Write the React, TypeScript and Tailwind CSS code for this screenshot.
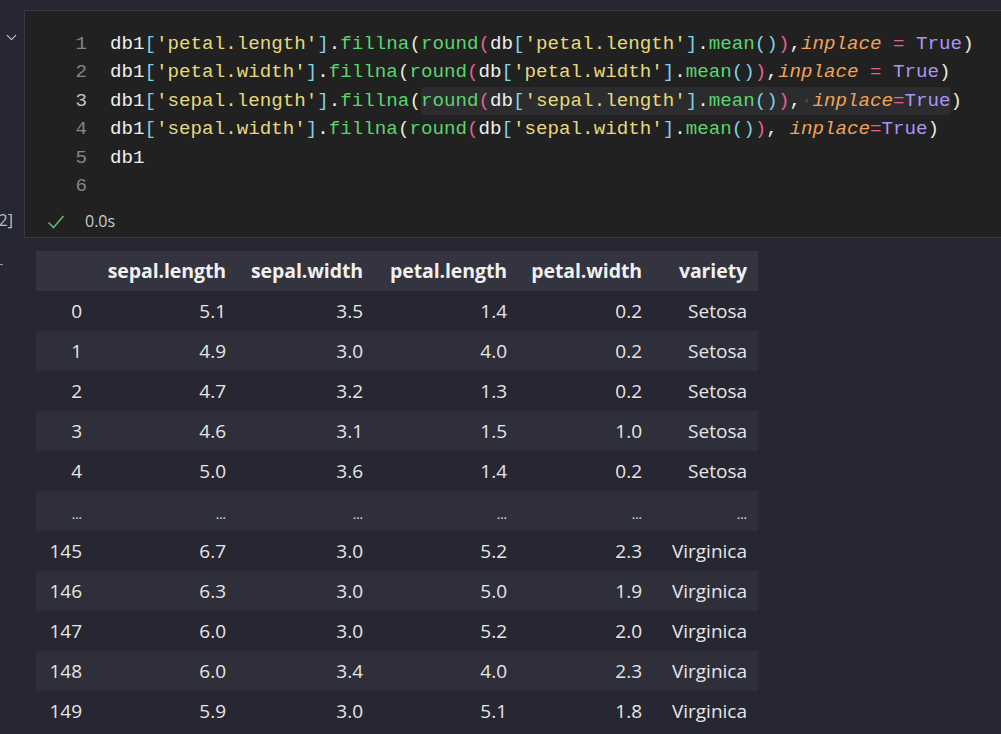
import { ChevronDown } from 'lucide-react'

const Y = 'text-[#e6d97a]'
const G = 'text-[#5bd46e]'
const W = 'text-[#efefef]'
const B = 'text-[#7fd2ea]'
const P = 'text-[#e8608f]'
const C = 'text-[#eee9d2]'
const O = 'text-[#f2a354] italic'
const V = 'text-[#a996f2]'

type Tok = [string, string]

function lineTokens(col: string, spaced: boolean): Tok[] {
  const start: Tok[] = [
    [W, 'db1'], [B, '['], [Y, `'${col}'`], [B, ']'], [W, '.'], [G, 'fillna'], [C, '('],
  ]
  const mid: Tok[] = [
    [G, 'round'], [P, '('], [W, 'db'], [B, '['], [Y, `'${col}'`], [B, ']'], [W, '.'], [G, 'mean'],
    [B, '()'], [P, ')'], [W, ','],
  ]
  const tail: Tok[] = spaced
    ? [[W, ' '], [O, 'inplace'], [P, '='], [V, 'True']]
    : [[O, 'inplace'], [W, ' '], [P, '='], [W, ' '], [V, 'True']]
  return [...start, ...mid, ...tail, [C, ')']]
}

const codeLines: Tok[][] = [
  lineTokens('petal.length', false),
  lineTokens('petal.width', false),
  lineTokens('sepal.length', true),
  lineTokens('sepal.width', true),
  [[W, 'db1']],
  [],
]

function CodeLine({ toks, n }: { toks: Tok[]; n: number }) {
  // line 3 has the bracket pair highlight around the fillna arguments
  if (n === 3) {
    const head = toks.slice(0, 7)
    const body = toks.slice(7, toks.length - 1)
    const last = toks[toks.length - 1]
    return (
      <>
        {head.map((t, i) => <span key={i} className={t[0]}>{t[1]}</span>)}
        <span className="bg-[#2c2c2e] rounded-[4px] py-[3px]">
          {body.map((t, i) =>
            t[1] === ' ' ? <span key={i} className="text-[#4d4d4d]">·</span> : <span key={i} className={t[0]}>{t[1]}</span>
          )}
        </span>
        <span className={last[0]}>{last[1]}</span>
      </>
    )
  }
  return <>{toks.map((t, i) => <span key={i} className={t[0]}>{t[1]}</span>)}</>
}

const rows: [string, string, string, string, string, string][] = [
  ['0', '5.1', '3.5', '1.4', '0.2', 'Setosa'],
  ['1', '4.9', '3.0', '4.0', '0.2', 'Setosa'],
  ['2', '4.7', '3.2', '1.3', '0.2', 'Setosa'],
  ['3', '4.6', '3.1', '1.5', '1.0', 'Setosa'],
  ['4', '5.0', '3.6', '1.4', '0.2', 'Setosa'],
  ['...', '...', '...', '...', '...', '...'],
  ['145', '6.7', '3.0', '5.2', '2.3', 'Virginica'],
  ['146', '6.3', '3.0', '5.0', '1.9', 'Virginica'],
  ['147', '6.0', '3.0', '5.2', '2.0', 'Virginica'],
  ['148', '6.0', '3.4', '4.0', '2.3', 'Virginica'],
  ['149', '5.9', '3.0', '5.1', '1.8', 'Virginica'],
]

const widths = ['w-[58px]', 'w-[144px]', 'w-[137px]', 'w-[144px]', 'w-[135px]', 'w-[104px]']
const headers = ['', 'sepal.length', 'sepal.width', 'petal.length', 'petal.width', 'variety']

export default function App() {
  return (
    <div className="w-[1001px] h-[734px] overflow-hidden bg-[#262732] text-[#e8e8e8] font-['Open_Sans',sans-serif]">
      {/* code cell */}
      <div className="flex pt-[10px]">
        <div className="w-[24px] shrink-0 relative">
          <ChevronDown size={17} strokeWidth={1.6} className="absolute left-[3px] top-[19px] text-[#c8c8c8]" />
          <div className="absolute left-0 top-[198px] w-[13px] overflow-hidden flex justify-end">
            <span className="whitespace-nowrap shrink-0 text-[16px] text-[#bdbdbd]">[2]</span>
          </div>
        </div>
        <div className="flex-1 bg-[#212121] border border-[#383a44] border-r-0 h-[228px]">
          <div className="pt-[19px] font-['Liberation_Mono',monospace] text-[19.2px] leading-[28.4px] whitespace-pre">
            {codeLines.map((l, i) => (
              <div key={i} className="flex">
                <span className={`w-[62px] text-right shrink-0 ${i === 2 ? 'text-[#c6c6c6]' : 'text-[#858585]'}`}>{i + 1}</span>
                <span className="pl-[23px]">
                  <CodeLine toks={l} n={i + 1} />
                </span>
              </div>
            ))}
          </div>
          <div className="flex items-center h-[40px] mt-[1px] pl-[22px] gap-[20px]">
            <svg width="18" height="16" viewBox="0 0 18 16" className="mt-[1px]">
              <path d="M1.5 8.5 L6.5 13.5 L16.5 2" fill="none" stroke="#5cb868" strokeWidth="1.6" />
            </svg>
            <span className="text-[16px] text-[#cccccc]">0.0s</span>
          </div>
        </div>
      </div>

      {/* output */}
      <div className="flex mt-[13px]">
        <div className="w-[36px] shrink-0 relative">
          <div className="absolute left-0 top-[13px] w-[3px] h-[1px] bg-[#9a9a9a]" />
        </div>
        <table className="border-collapse text-[19px] table-fixed">
          <thead>
            <tr className="bg-[#33343f] h-[40px]">
              {headers.map((h, i) => (
                <th key={i} className={`${widths[i]} px-3 text-right font-bold text-[19.5px] tracking-[-0.1px] text-[#f0f0f0] ${i === 5 ? 'pr-[11px]' : ''}`}>{h}</th>
              ))}
            </tr>
          </thead>
          <tbody>
            {rows.map((r, ri) => (
              <tr key={ri} className={`h-[40px] ${ri % 2 === 1 ? 'bg-[#2e2f3b]' : 'bg-[#262732]'}`}>
                {r.map((c, ci) => (
                  <td key={ci} className={`px-3 text-right text-[#e6e6e6] ${ci === 5 ? 'pr-[11px]' : ''} ${c === '...' ? 'text-[13px] align-bottom pb-[7px]' : ''}`}>{c}</td>
                ))}
              </tr>
            ))}
          </tbody>
        </table>
      </div>
    </div>
  )
}
